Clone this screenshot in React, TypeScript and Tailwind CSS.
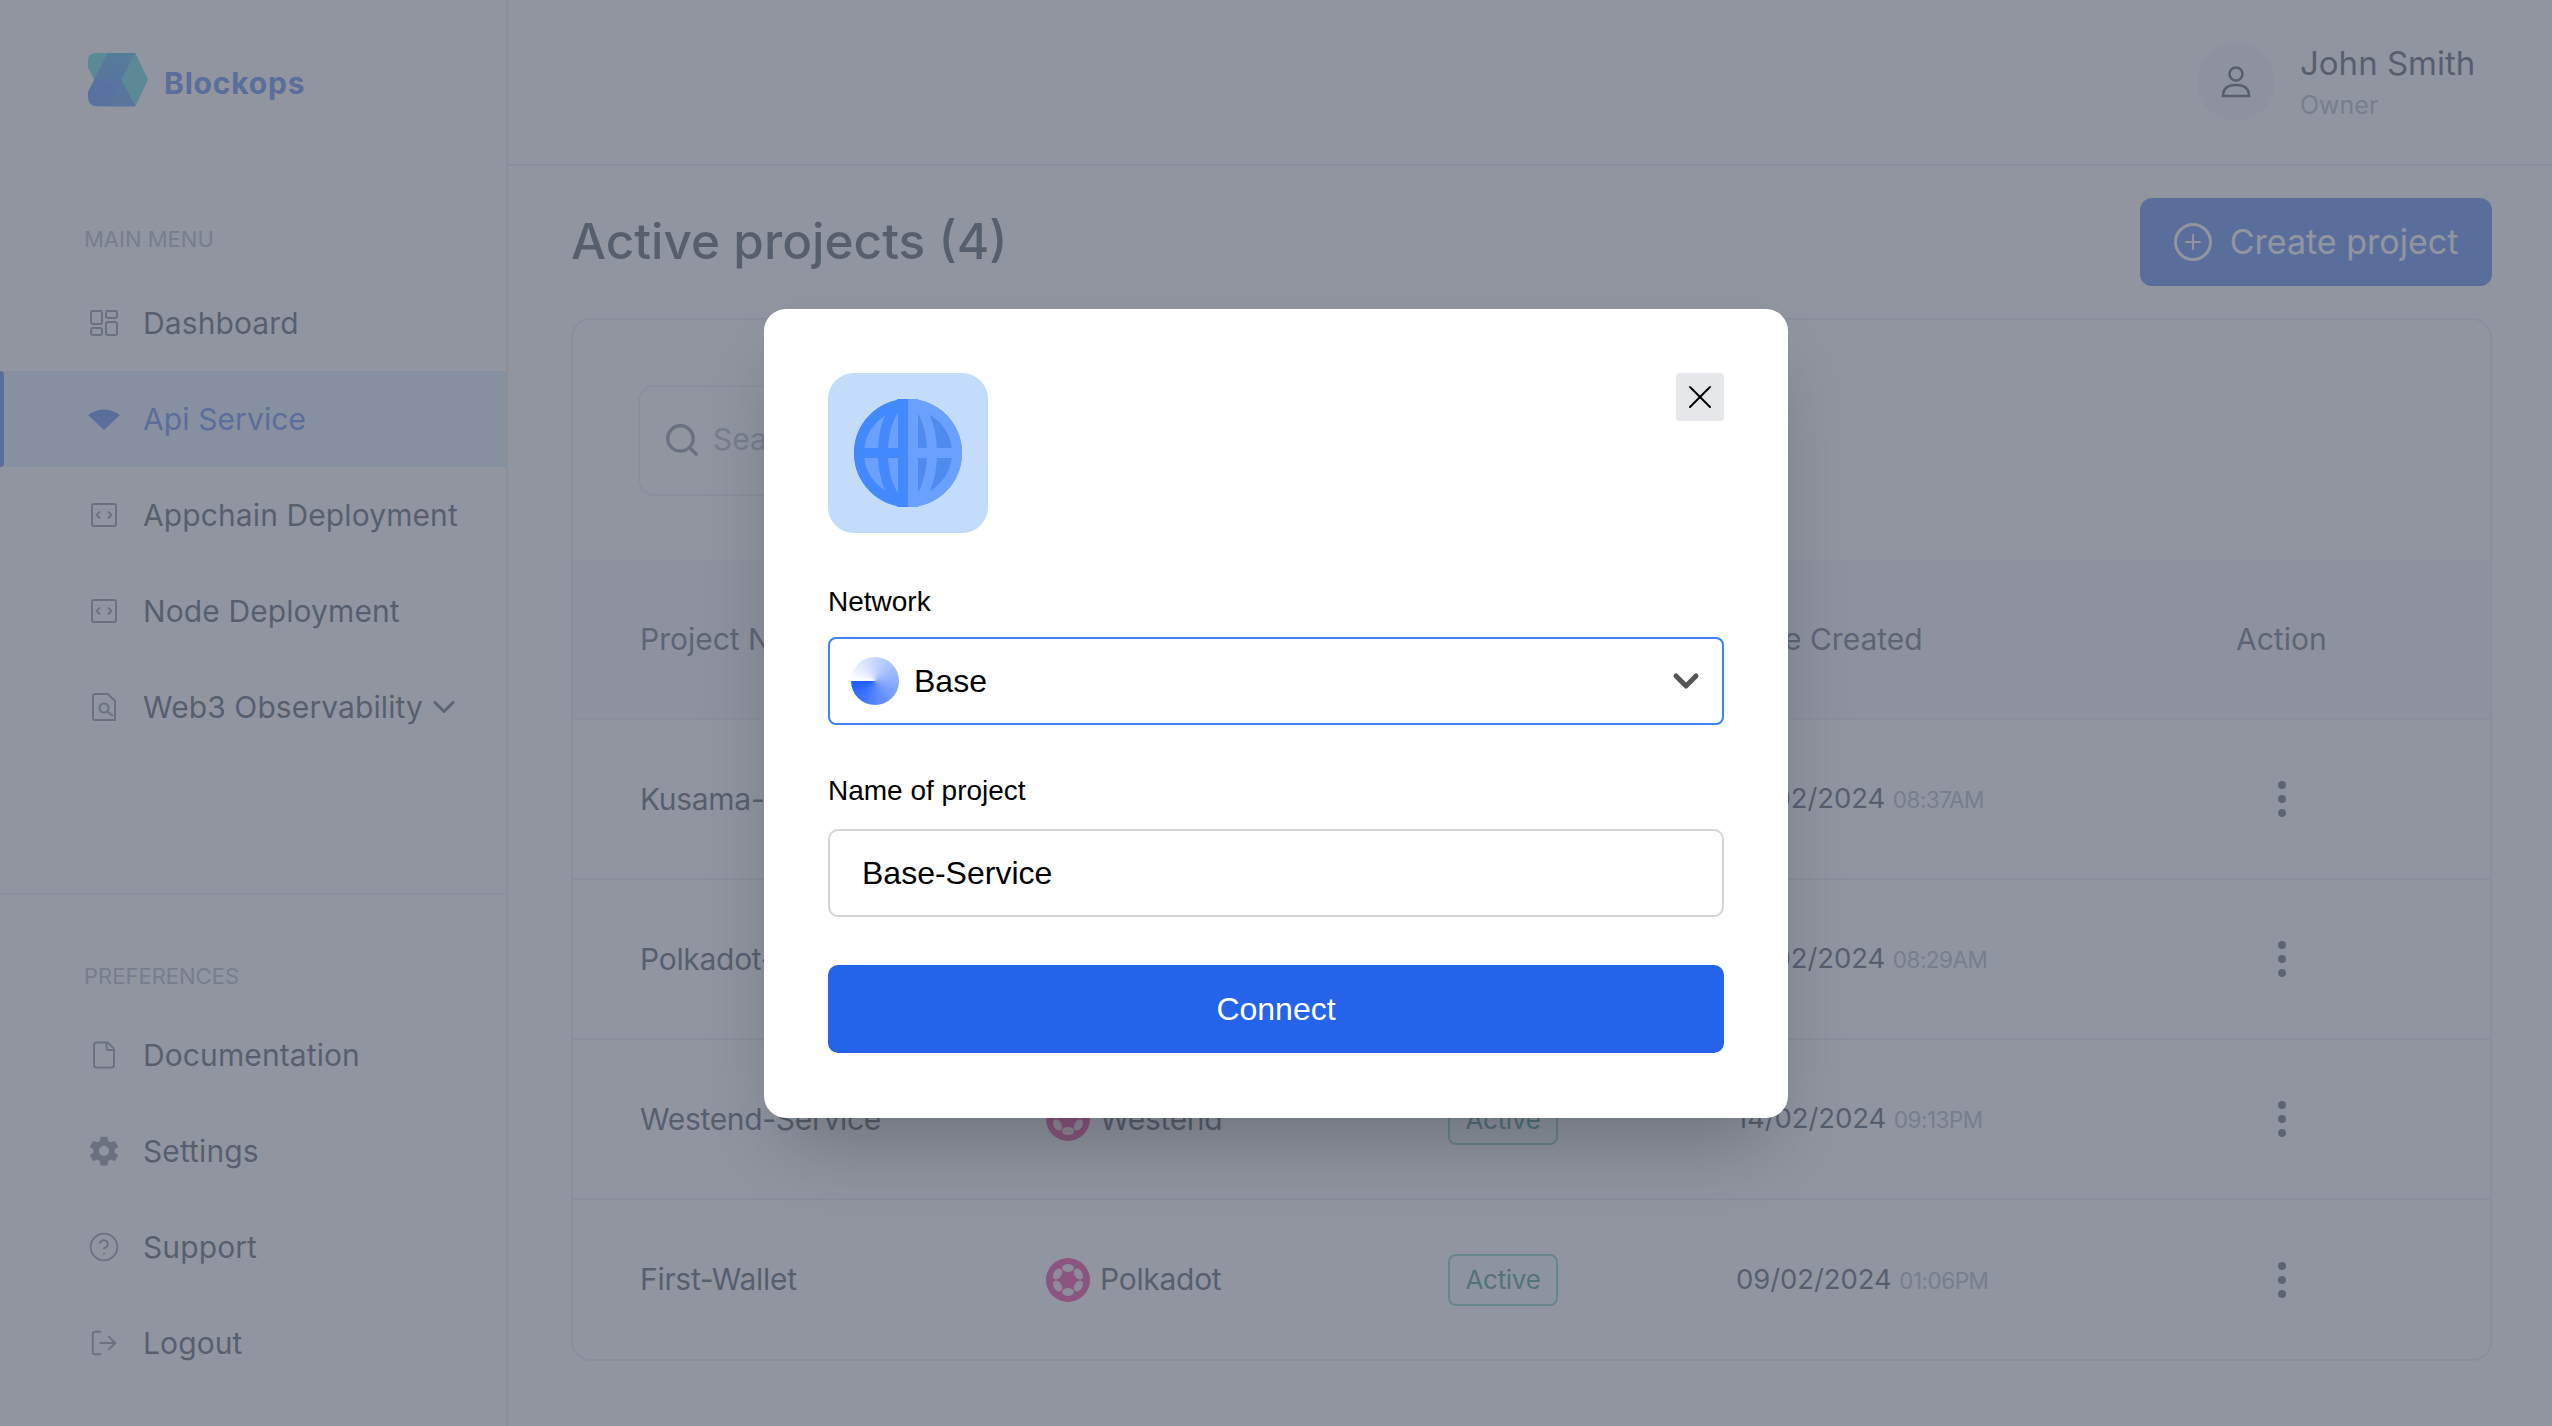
import { ChevronDown, CircleHelp, File, LogOut, Plus, Search, X } from 'lucide-react';
import { IoSettingsSharp } from 'react-icons/io5';
import type { ReactNode } from 'react';

function Logo() {
  return (
    <svg width="60" height="54" viewBox="0 0 60 54">
      <defs>
        <linearGradient id="logoBlue" x1="0.5" y1="0" x2="0.4" y2="0.6">
          <stop offset="0" stopColor="#1f9be0" />
          <stop offset="1" stopColor="#2076ff" />
        </linearGradient>
      </defs>
      <path d="M8 0H47.3L60 26.7L47.3 53.3H10Q0 53.3 0 43V39L6.3 26.7L0 14.7V8Q0 0 8 0Z" fill="#2fd0d8" />
      <path d="M19.7 0H47.3L33 26.7L47.3 53.3H10Q0 53.3 0 43V39L6.3 26.7Z" fill="url(#logoBlue)" />
      <path d="M33 26.7L47.3 53.3H19.7Z" fill="#2a80f0" />
    </svg>
  );
}

function DashIcon() {
  return (
    <svg width="30" height="30" viewBox="0 0 30 30" fill="none" stroke="currentColor" strokeWidth="2">
      <rect x="2" y="3" width="11" height="13" rx="2" />
      <rect x="2" y="20" width="11" height="7" rx="2" />
      <rect x="17" y="3" width="11" height="7" rx="2" />
      <rect x="17" y="14" width="11" height="13" rx="2" />
    </svg>
  );
}

function ApiIcon() {
  return (
    <svg width="34" height="24" viewBox="0 0 34 24">
      <path d="M1 8Q17 -3 33 8L17 23Z" fill="#2563eb" />
    </svg>
  );
}

function CodeIcon() {
  return (
    <svg width="30" height="30" viewBox="0 0 30 30" fill="none" stroke="currentColor" strokeWidth="2">
      <rect x="3" y="4" width="24" height="22" rx="2" />
      <path d="M11 11.5L7.5 15L11 18.5M19 11.5L22.5 15L19 18.5" strokeWidth="1.8" />
    </svg>
  );
}

function ObsIcon() {
  return (
    <svg width="30" height="30" viewBox="0 0 30 30" fill="none" stroke="currentColor" strokeWidth="2">
      <path d="M19 2H6Q4 2 4 4V26Q4 28 6 28H26V9Z" />
      <circle cx="15" cy="16" r="4.5" />
      <path d="M18.5 19.5L24 24" />
    </svg>
  );
}

function PersonIcon() {
  return (
    <svg width="30" height="34" viewBox="0 0 30 34" fill="none" stroke="#1f2937" strokeWidth="2.6">
      <circle cx="15" cy="9" r="6.5" />
      <path d="M2 31Q2 20 15 20Q28 20 28 31Z" />
    </svg>
  );
}

function Globe() {
  return (
    <svg width="108" height="108" viewBox="0 0 108 108" fill="none" strokeWidth="10">
      <defs>
        <clipPath id="leftHalf">
          <rect x="0" y="0" width="54" height="108" />
        </clipPath>
        <clipPath id="rightHalf">
          <rect x="54" y="0" width="54" height="108" />
        </clipPath>
      </defs>
      <g clipPath="url(#leftHalf)" stroke="#4289ff">
        <circle cx="54" cy="54" r="54" fill="#6aa0ff" stroke="none" />
        <circle cx="54" cy="54" r="49" />
        <ellipse cx="54" cy="54" rx="25" ry="52" />
        <path d="M0 54H54M49 0V108" />
      </g>
      <g clipPath="url(#rightHalf)" stroke="#6aa0ff">
        <circle cx="54" cy="54" r="54" fill="#4f8af0" stroke="none" />
        <circle cx="54" cy="54" r="49" />
        <ellipse cx="54" cy="54" rx="24" ry="52" />
        <path d="M54 54H108M59 0V108" />
      </g>
    </svg>
  );
}

function PolkadotIcon() {
  return (
    <svg width="44" height="44" viewBox="0 0 44 44" className="shrink-0">
      <circle cx="22" cy="22" r="22" fill="#e6007a" />
      <ellipse cx="22" cy="10" rx="6" ry="4" fill="#fbd5ea" />
      <ellipse cx="22" cy="34" rx="6" ry="4" fill="#fbd5ea" />
      <ellipse cx="11.6" cy="16" rx="6" ry="4" fill="#fbd5ea" transform="rotate(-60 11.6 16)" />
      <ellipse cx="32.4" cy="16" rx="6" ry="4" fill="#fbd5ea" transform="rotate(60 32.4 16)" />
      <ellipse cx="11.6" cy="28" rx="6" ry="4" fill="#fbd5ea" transform="rotate(60 11.6 28)" />
      <ellipse cx="32.4" cy="28" rx="6" ry="4" fill="#fbd5ea" transform="rotate(-60 32.4 28)" />
    </svg>
  );
}

function NavItem({ icon, label, active, trailing }: { icon: ReactNode; label: string; active?: boolean; trailing?: ReactNode }) {
  return (
    <div className={`relative flex h-[96px] items-center pl-[86px] ${active ? 'bg-[#dbeafe] text-[#2563eb]' : 'text-[#1f2937]'}`}>
      {active && <div className="absolute left-0 top-0 h-full w-[4px] rounded-r bg-[#2563eb]" />}
      <div className={`flex w-[36px] justify-center ${active ? '' : 'text-[#6b7280]'}`}>{icon}</div>
      <span className="ml-[21px] text-[30px] tracking-[0.1px]">{label}</span>
      {trailing}
    </div>
  );
}

const rows = [
  { name: 'Kusama-Service', net: 'Kusama', date: '12/02/2024', time: '08:37AM' },
  { name: 'Polkadot-Service', net: 'Polkadot', date: '12/02/2024', time: '08:29AM' },
  { name: 'Westend-Service', net: 'Westend', date: '14/02/2024', time: '09:13PM' },
  { name: 'First-Wallet', net: 'Polkadot', date: '09/02/2024', time: '01:06PM' },
];

const cols = 'grid grid-cols-[406px_402px_288px_500px_1fr] items-center pl-[67px]';

export default function App() {
  return (
    <div className="relative flex h-screen w-full overflow-hidden bg-white font-[Inter,sans-serif] text-[#1f2937]">
      <aside className="flex h-full w-[508px] shrink-0 flex-col border-r-2 border-[#e5e7eb]">
        <div className="flex h-[165px] items-start pl-[88px] pt-[53px]">
          <Logo />
          <span className="ml-[16px] mt-[8px] text-[30px] font-bold tracking-[0.8px] text-[#2563eb]">Blockops</span>
        </div>
        <div className="pl-[84px] pt-[58px] text-[22px] text-[#9ca3af]">MAIN MENU</div>
        <nav className="mt-[19px]">
          <NavItem icon={<DashIcon />} label="Dashboard" />
          <NavItem icon={<ApiIcon />} label="Api Service" active />
          <NavItem icon={<CodeIcon />} label="Appchain Deployment" />
          <NavItem icon={<CodeIcon />} label="Node Deployment" />
          <NavItem
            icon={<ObsIcon />}
            label="Web3 Observability"
            trailing={<ChevronDown size={36} strokeWidth={2} className="ml-[3px] text-[#374151]" />}
          />
        </nav>
        <div className="mt-[138px] border-t-2 border-[#e5e7eb] pl-[84px] pt-[65px] text-[22px] text-[#9ca3af]">PREFERENCES</div>
        <nav className="mt-[14px]">
          <NavItem icon={<File size={30} strokeWidth={1.6} />} label="Documentation" />
          <NavItem icon={<IoSettingsSharp size={32} />} label="Settings" />
          <NavItem icon={<CircleHelp size={32} strokeWidth={1.4} />} label="Support" />
          <NavItem icon={<LogOut size={30} strokeWidth={1.5} />} label="Logout" />
        </nav>
      </aside>

      <main className="flex min-w-0 flex-1 flex-col">
        <header className="flex h-[166px] shrink-0 items-center justify-end border-b-2 border-[#e5e7eb] pr-[77px]">
          <div className="flex h-[78px] w-[78px] items-center justify-center rounded-full bg-[#f3f4f6]">
            <PersonIcon />
          </div>
          <div className="ml-[25px] w-[175px] whitespace-nowrap">
            <div className="text-[33px] leading-[44px]">John Smith</div>
            <div className="mt-[2px] text-[25px] leading-[36px] text-[#9ca3af]">Owner</div>
          </div>
        </header>
        <div className="flex flex-1 flex-col pl-[63px] pr-[60px]">
          <div className="flex h-[152px] shrink-0 items-center justify-between">
            <h1 className="-mt-[2px] text-[49.5px] font-medium">Active projects (4)</h1>
            <button className="flex h-[88px] w-[352px] items-center justify-center gap-[18px] rounded-[12px] bg-[#2563eb] text-[34px] text-white">
              <span className="flex h-[38px] w-[38px] items-center justify-center rounded-full border-[3px] border-white">
                <Plus size={24} strokeWidth={2} />
              </span>
              <span className="-mt-[2px]">Create project</span>
            </button>
          </div>
          <section className="rounded-[20px] border-2 border-[#e5e7eb]">
            <div className="h-[240px] pl-[65px] pt-[65px]">
              <div className="flex h-[111px] w-[640px] items-center gap-[12px] rounded-[16px] border-2 border-[#e5e7eb] pb-[2px] pl-[23px] text-[30px] text-[#9ca3af]">
                <Search size={38} strokeWidth={2.2} className="text-[#6b7280]" />
                Search
              </div>
            </div>
            <div className={`${cols} h-[158px] bg-[#f3f4f6] text-[30px] text-[#374151]`}>
              <span>Project Name</span>
              <span>Network</span>
              <span>Status</span>
              <span>Date Created</span>
              <span>Action</span>
            </div>
            {rows.map((r) => (
              <div key={r.name} className={`${cols} h-[160px] border-t-2 border-[#e5e7eb] text-[30px] tracking-[-0.3px] last:h-[161px]`}>
                <span>{r.name}</span>
                <span className="flex items-center gap-[10px]">
                  <PolkadotIcon />
                  {r.net}
                </span>
                <span>
                  <span className="inline-flex h-[52px] w-[110px] items-center justify-center rounded-[8px] border-2 border-[#5cc4b0] bg-[#f0fdf9] text-[26px] text-[#0f766e]">
                    Active
                  </span>
                </span>
                <span className="whitespace-nowrap text-[27.5px] tracking-[-0.1px]">
                  {r.date} <span className="text-[22.5px] tracking-[-0.5px] text-[#9ca3af]">{r.time}</span>
                </span>
                <span className="flex w-[92px] flex-col items-center gap-[6px]">
                  <i className="h-[8px] w-[8px] rounded-full bg-[#374151]" />
                  <i className="h-[8px] w-[8px] rounded-full bg-[#374151]" />
                  <i className="h-[8px] w-[8px] rounded-full bg-[#374151]" />
                </span>
              </div>
            ))}
          </section>
        </div>
      </main>

      <div className="absolute inset-0 flex items-center justify-center bg-[#6b7280]/75">
        <div className="w-[1024px] rounded-[22px] bg-white px-[64px] pb-[65px] pt-[64px] font-['Liberation_Sans',sans-serif] text-black shadow-[0_40px_80px_-20px_rgba(0,0,0,0.25)]">
          <div className="flex items-start justify-between">
            <div className="flex h-[160px] w-[160px] items-center justify-center rounded-[26px] bg-[#c3dcfb]">
              <Globe />
            </div>
            <button className="flex h-[48px] w-[48px] items-center justify-center rounded-[4px] bg-[#e5e7eb]">
              <X size={40} strokeWidth={1.2} />
            </button>
          </div>
          <label className="mt-[51px] block text-[28px] leading-[36px]">Network</label>
          <div className="mt-[17px] flex h-[88px] items-center rounded-[8px] border-2 border-[#3b82f6] pl-[21px] pr-[16px]">
            <span className="h-[48px] w-[48px] rounded-full bg-[conic-gradient(from_270deg,#ffffff,#1c5cff)]" />
            <span className="ml-[15px] flex-1 text-[32px]">Base</span>
            <ChevronDown size={40} strokeWidth={3} className="text-[#555]" />
          </div>
          <label className="mt-[48px] block text-[28px] leading-[36px]">Name of project</label>
          <div className="mt-[20px] flex h-[88px] items-center rounded-[10px] border-2 border-[#d4d4d8] pl-[32px] text-[32px]">Base-Service</div>
          <button className="mt-[48px] flex h-[88px] w-full items-center justify-center rounded-[10px] bg-[#2563eb] text-[32px] text-white">
            Connect
          </button>
        </div>
      </div>
    </div>
  );
}
